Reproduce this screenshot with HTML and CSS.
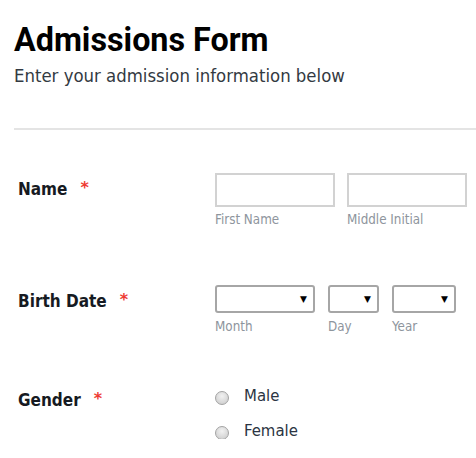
FILE: index.html
```html
<!DOCTYPE html>
<html lang="en">
<head>
<meta charset="utf-8">
<title>Admissions Form</title>
<link rel="stylesheet" href="styles.css">
</head>
<body>
<div class="page">
  <header class="header">
    <h1 class="title">Admissions Form</h1>
    <p class="subtitle">Enter your admission information below</p>
  </header>
  <hr class="divider">
  <form class="form">
    <div class="row row-name">
      <div class="label">Name<span class="req">*</span></div>
      <div class="fields">
        <div class="field">
          <input class="text-input" type="text" aria-label="First Name">
          <span class="sublabel">First Name</span>
        </div>
        <div class="field">
          <input class="text-input" type="text" aria-label="Middle Initial">
          <span class="sublabel">Middle Initial</span>
        </div>
      </div>
    </div>

    <div class="row row-birth">
      <div class="label">Birth Date<span class="req">*</span></div>
      <div class="fields fields-date">
        <div class="field">
          <div class="select select-month"><span class="arrow">▼</span></div>
          <span class="sublabel">Month</span>
        </div>
        <div class="field">
          <div class="select select-day"><span class="arrow">▼</span></div>
          <span class="sublabel">Day</span>
        </div>
        <div class="field">
          <div class="select select-year"><span class="arrow">▼</span></div>
          <span class="sublabel">Year</span>
        </div>
      </div>
    </div>

    <div class="row row-gender">
      <div class="label">Gender<span class="req">*</span></div>
      <div class="options">
        <div class="option"><span class="radio"></span><span class="option-text">Male</span></div>
        <div class="option"><span class="radio"></span><span class="option-text">Female</span></div>
      </div>
    </div>
  </form>
</div>
</body>
</html>
```
FILE: styles.css
```css
* { box-sizing: border-box; }

html, body {
  margin: 0;
  padding: 0;
  background: #ffffff;
}

body {
  font-family: "DejaVu Sans Condensed", "DejaVu Sans", sans-serif;
  color: #222;
  overflow: hidden;
}

.page {
  width: 476px;
  padding-top: 24px;
}

.header {
  padding-left: 14px;
}

.title {
  font-family: Roboto, "Liberation Sans", sans-serif;
  font-weight: 700;
  font-size: 32.3px;
  line-height: 32px;
  margin: 0;
  color: #000;
}

.subtitle {
  font-size: 18.4px;
  line-height: 22px;
  margin: 9px 0 0 0;
  color: #333a42;
}

.divider {
  border: 0;
  height: 2px;
  background: #e4e4e4;
  margin: 41px 0 0 14px;
}

.form {
  padding-left: 18px;
  margin-top: 43px;
}

.row {
  display: grid;
  grid-template-columns: 197px 1fr;
}

.row-birth { margin-top: 57px; }
.row-gender { margin-top: 49px; }

.label {
  font-weight: 700;
  font-size: 17px;
  line-height: 20px;
  color: #161a22;
  padding-top: 6px;
  display: flex;
  align-items: flex-start;
}

.row-gender .label { padding-top: 5.5px; }

.req {
  color: #ee3b34;
  font-family: "DejaVu Sans", sans-serif;
  font-weight: 700;
  font-size: 16px;
  line-height: 16px;
  margin-left: 13px;
  margin-top: 1px;
}

.fields {
  display: flex;
  gap: 12px;
}

.fields-date { gap: 13px; }

.field {
  display: flex;
  flex-direction: column;
}

.text-input {
  width: 120px;
  height: 34px;
  border: 2px solid #d2d2d2;
  border-radius: 0;
  margin: 0;
  padding: 0;
  background: #fff;
  outline: none;
}

.sublabel {
  font-size: 13.3px;
  line-height: 16px;
  color: #8e959d;
  margin-top: 5px;
}

.fields-date .sublabel { margin-top: 6px; }

.select {
  height: 28px;
  border: 2px solid #a6a6a6;
  border-radius: 3px;
  background: #fff;
  display: flex;
  align-items: center;
  justify-content: flex-end;
  padding-right: 6px;
}

.select-month { width: 100px; }
.select-day { width: 51px; }
.select-year { width: 64px; }

.arrow {
  font-family: "DejaVu Sans", sans-serif;
  font-size: 9px;
  line-height: 9px;
  color: #000;
}

.options {
  display: flex;
  flex-direction: column;
  gap: 15px;
}

.option {
  display: flex;
  align-items: flex-start;
  height: 20px;
}

.radio {
  width: 14px;
  height: 14px;
  border-radius: 50%;
  border: 1px solid #a3a3a3;
  background: radial-gradient(circle at 50% 35%, #f2f2f2 0%, #d9d9d9 60%, #c9c9c9 100%);
  margin-top: 7px;
  flex: none;
}

.option-text {
  font-size: 16.6px;
  line-height: 20px;
  color: #2b3442;
  margin-left: 15px;
  margin-top: 2px;
}
```
